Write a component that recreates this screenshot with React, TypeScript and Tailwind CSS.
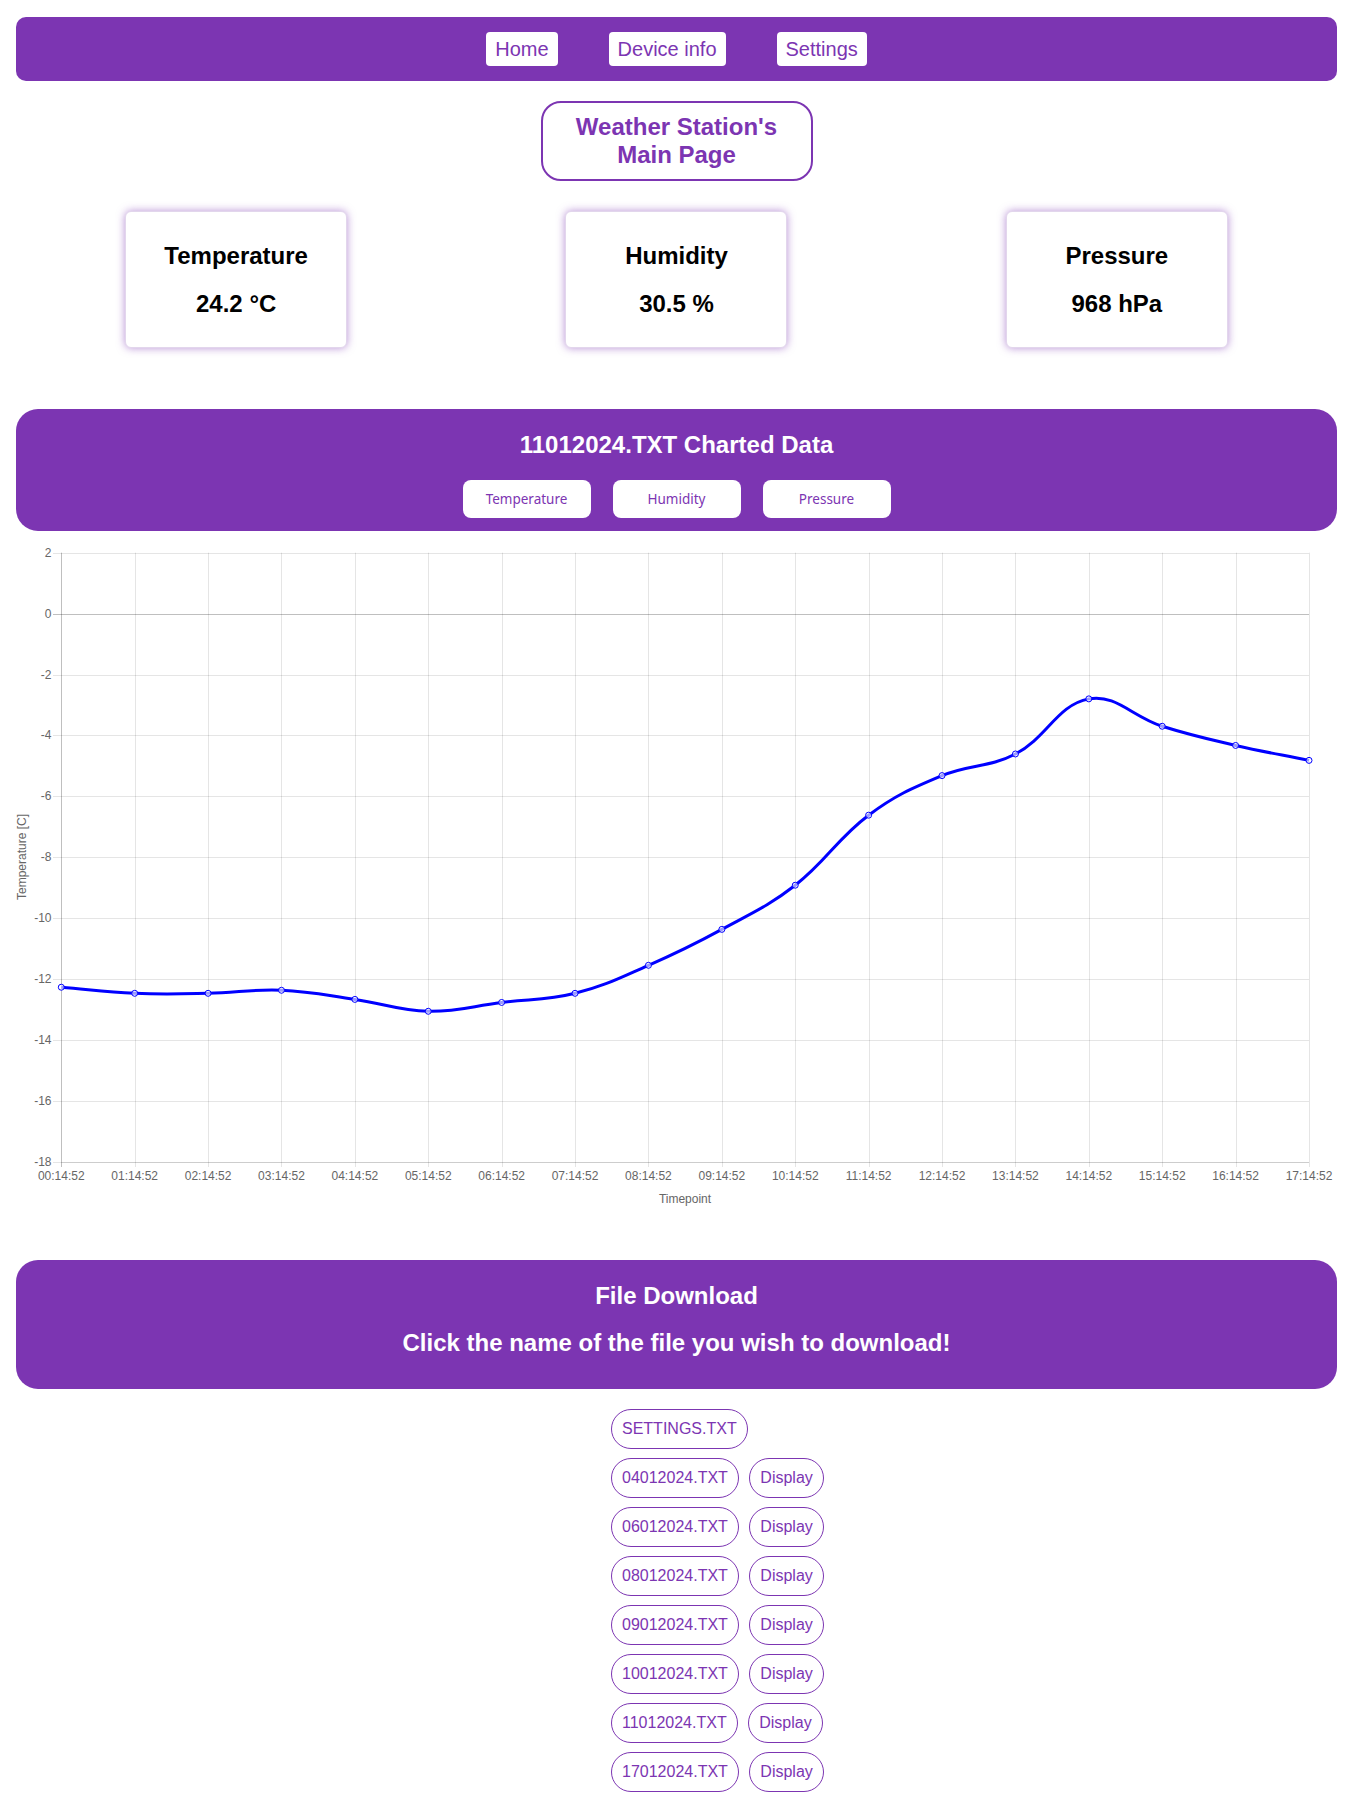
import React from "react";

const values = [
  -12.27, -12.47, -12.47, -12.37, -12.67, -13.06, -12.77, -12.47, -11.55, -10.37,
  -8.92, -6.62, -5.32, -4.61, -2.8, -3.7, -4.33, -4.82,
];

const LEFT = 61.3;
const RIGHT = 1309;
const TOP = 552.7;
const BOTTOM = 1161.7;
const XSTEP = (RIGHT - LEFT) / 17;
const YUNIT = (BOTTOM - TOP) / 20;

const xAt = (i: number) => LEFT + i * XSTEP;
const yAt = (v: number) => TOP + (2 - v) * YUNIT;

type P = { x: number; y: number };

function buildPath(pts: P[], t: number) {
  const ctrl = pts.map((cur, i) => {
    const prev = i === 0 ? cur : pts[i - 1];
    const next = i === pts.length - 1 ? cur : pts[i + 1];
    const d01 = Math.hypot(cur.x - prev.x, cur.y - prev.y);
    const d12 = Math.hypot(next.x - cur.x, next.y - cur.y);
    let s01 = d01 / (d01 + d12);
    let s12 = d12 / (d01 + d12);
    if (isNaN(s01)) s01 = 0;
    if (isNaN(s12)) s12 = 0;
    const fa = t * s01;
    const fb = t * s12;
    return {
      prev: { x: cur.x - fa * (next.x - prev.x), y: cur.y - fa * (next.y - prev.y) },
      next: { x: cur.x + fb * (next.x - prev.x), y: cur.y + fb * (next.y - prev.y) },
    };
  });
  let d = `M ${pts[0].x} ${pts[0].y}`;
  for (let i = 1; i < pts.length; i++) {
    const a = ctrl[i - 1].next;
    const b = ctrl[i].prev;
    d += ` C ${a.x} ${a.y} ${b.x} ${b.y} ${pts[i].x} ${pts[i].y}`;
  }
  return d;
}

function Chart() {
  const pts = values.map((v, i) => ({ x: xAt(i), y: yAt(v) }));
  const path = buildPath(pts, 0.4);
  const yTicks = Array.from({ length: 11 }, (_, k) => 2 - 2 * k);
  const xLabels = Array.from({ length: 18 }, (_, i) => `${String(i).padStart(2, "0")}:14:52`);
  const font = "'Liberation Sans', Arial, sans-serif";
  return (
    <svg width={1321} height={729} className="block" style={{ fontFamily: font }}>
      <g transform="translate(-16,-531)">
        {yTicks.map((v, k) => {
          const y = Math.round(TOP + k * 2 * YUNIT) + 0.5;
          return (
            <g key={v}>
              <line
                x1={53}
                x2={RIGHT}
                y1={y}
                y2={y}
                stroke={v === 0 ? "rgba(0,0,0,0.25)" : "rgba(0,0,0,0.1)"}
                strokeWidth={1}
              />
              <text x={51.5} y={y - 0.5} textAnchor="end" dominantBaseline="central" fontSize={12} fill="#666">
                {v}
              </text>
            </g>
          );
        })}
        <line x1={LEFT} x2={RIGHT} y1={Math.round(BOTTOM) + 0.5} y2={Math.round(BOTTOM) + 0.5} stroke="rgba(0,0,0,0.1)" />
        {xLabels.map((l, i) => {
          const x = Math.round(xAt(i)) + 0.5;
          return (
            <g key={l}>
              <line
                x1={x}
                x2={x}
                y1={TOP}
                y2={1167}
                stroke={i === 0 ? "rgba(0,0,0,0.25)" : "rgba(0,0,0,0.1)"}
                strokeWidth={1}
              />
              <text x={xAt(i)} y={1176} textAnchor="middle" dominantBaseline="central" fontSize={12} fill="#666">
                {l}
              </text>
            </g>
          );
        })}
        <text
          x={0}
          y={0}
          transform="translate(22,857) rotate(-90)"
          textAnchor="middle"
          dominantBaseline="central"
          fontSize={12}
          fill="#666"
        >
          Temperature [C]
        </text>
        <text x={685} y={1199} textAnchor="middle" dominantBaseline="central" fontSize={12} fill="#666">
          Timepoint
        </text>
        <path d={path} fill="none" stroke="#0000ff" strokeWidth={3} strokeLinejoin="round" />
        {pts.map((p, i) => (
          <circle key={i} cx={p.x} cy={p.y} r={3} fill="rgba(255,255,255,0.6)" stroke="#0000ff" strokeWidth={1} />
        ))}
      </g>
    </svg>
  );
}

function Card({ title, value }: { title: string; value: string }) {
  return (
    <div className="w-[222px] h-[137px] bg-white rounded-[6px] border border-[#e2d6ec] shadow-[0_0_9px_rgba(124,53,178,0.55)] flex flex-col items-center pt-[30px] gap-[20px] text-black font-bold text-[24px] leading-[28px]">
      <div>{title}</div>
      <div>{value}</div>
    </div>
  );
}

const files = [
  "04012024.TXT",
  "06012024.TXT",
  "08012024.TXT",
  "09012024.TXT",
  "10012024.TXT",
  "11012024.TXT",
  "17012024.TXT",
];

export default function App() {
  const pill =
    "h-[40px] rounded-full border border-[#7c35b2] bg-white text-[#7c35b2] text-[16px] leading-[18px] px-[10px] flex items-center";
  return (
    <div
      className="bg-white min-h-screen px-[16px] pt-[17px] pb-[40px]"
      style={{ fontFamily: "'Liberation Sans', Arial, sans-serif" }}
    >
      <nav className="h-[64px] rounded-[10px] bg-[#7c35b2] flex items-center justify-center gap-[51px]">
        {["Home", "Device info", "Settings"].map((t) => (
          <button
            key={t}
            className="h-[34px] px-[9px] bg-white rounded-[4px] text-[20px] leading-[23px] text-[#7c35b2]"
          >
            {t}
          </button>
        ))}
      </nav>

      <div className="mt-[20px] mx-auto w-[272px] h-[80px] border-2 border-[#7c35b2] rounded-[20px] flex items-center justify-center text-center text-[24px] leading-[28px] font-bold text-[#7c35b2]">
        <div>
          Weather Station's
          <br />
          Main Page
        </div>
      </div>

      <div className="mt-[30px] flex justify-around">
        <Card title="Temperature" value="24.2 °C" />
        <Card title="Humidity" value="30.5 %" />
        <Card title="Pressure" value="968 hPa" />
      </div>

      <section className="mt-[61px] h-[122px] rounded-[22px] bg-[#7c35b2] flex flex-col items-center pt-[22px]">
        <h2 className="text-white font-bold text-[24px] leading-[28px]">11012024.TXT Charted Data</h2>
        <div className="mt-[21px] flex gap-[22px]">
          {["Temperature", "Humidity", "Pressure"].map((t) => (
            <button
              key={t}
              className="w-[128px] h-[38px] bg-white rounded-[8px] text-[13.5px] text-[#7c35b2]"
              style={{ fontFamily: "'Noto Sans', sans-serif" }}
            >
              {t}
            </button>
          ))}
        </div>
      </section>

      <Chart />

      <section className="h-[129px] rounded-[22px] bg-[#7c35b2] flex flex-col items-center pt-[22px] text-white font-bold text-[24px] leading-[28px]">
        <h2>File Download</h2>
        <p className="mt-[19px]">Click the name of the file you wish to download!</p>
      </section>

      <div className="mt-[20px] ml-[595px] flex flex-col gap-[9px]">
        <div className="flex">
          <button className={pill}>SETTINGS.TXT</button>
        </div>
        {files.map((f) => (
          <div key={f} className="flex gap-[10.5px]">
            <button className={pill}>{f}</button>
            <button className={pill}>Display</button>
          </div>
        ))}
      </div>
    </div>
  );
}
